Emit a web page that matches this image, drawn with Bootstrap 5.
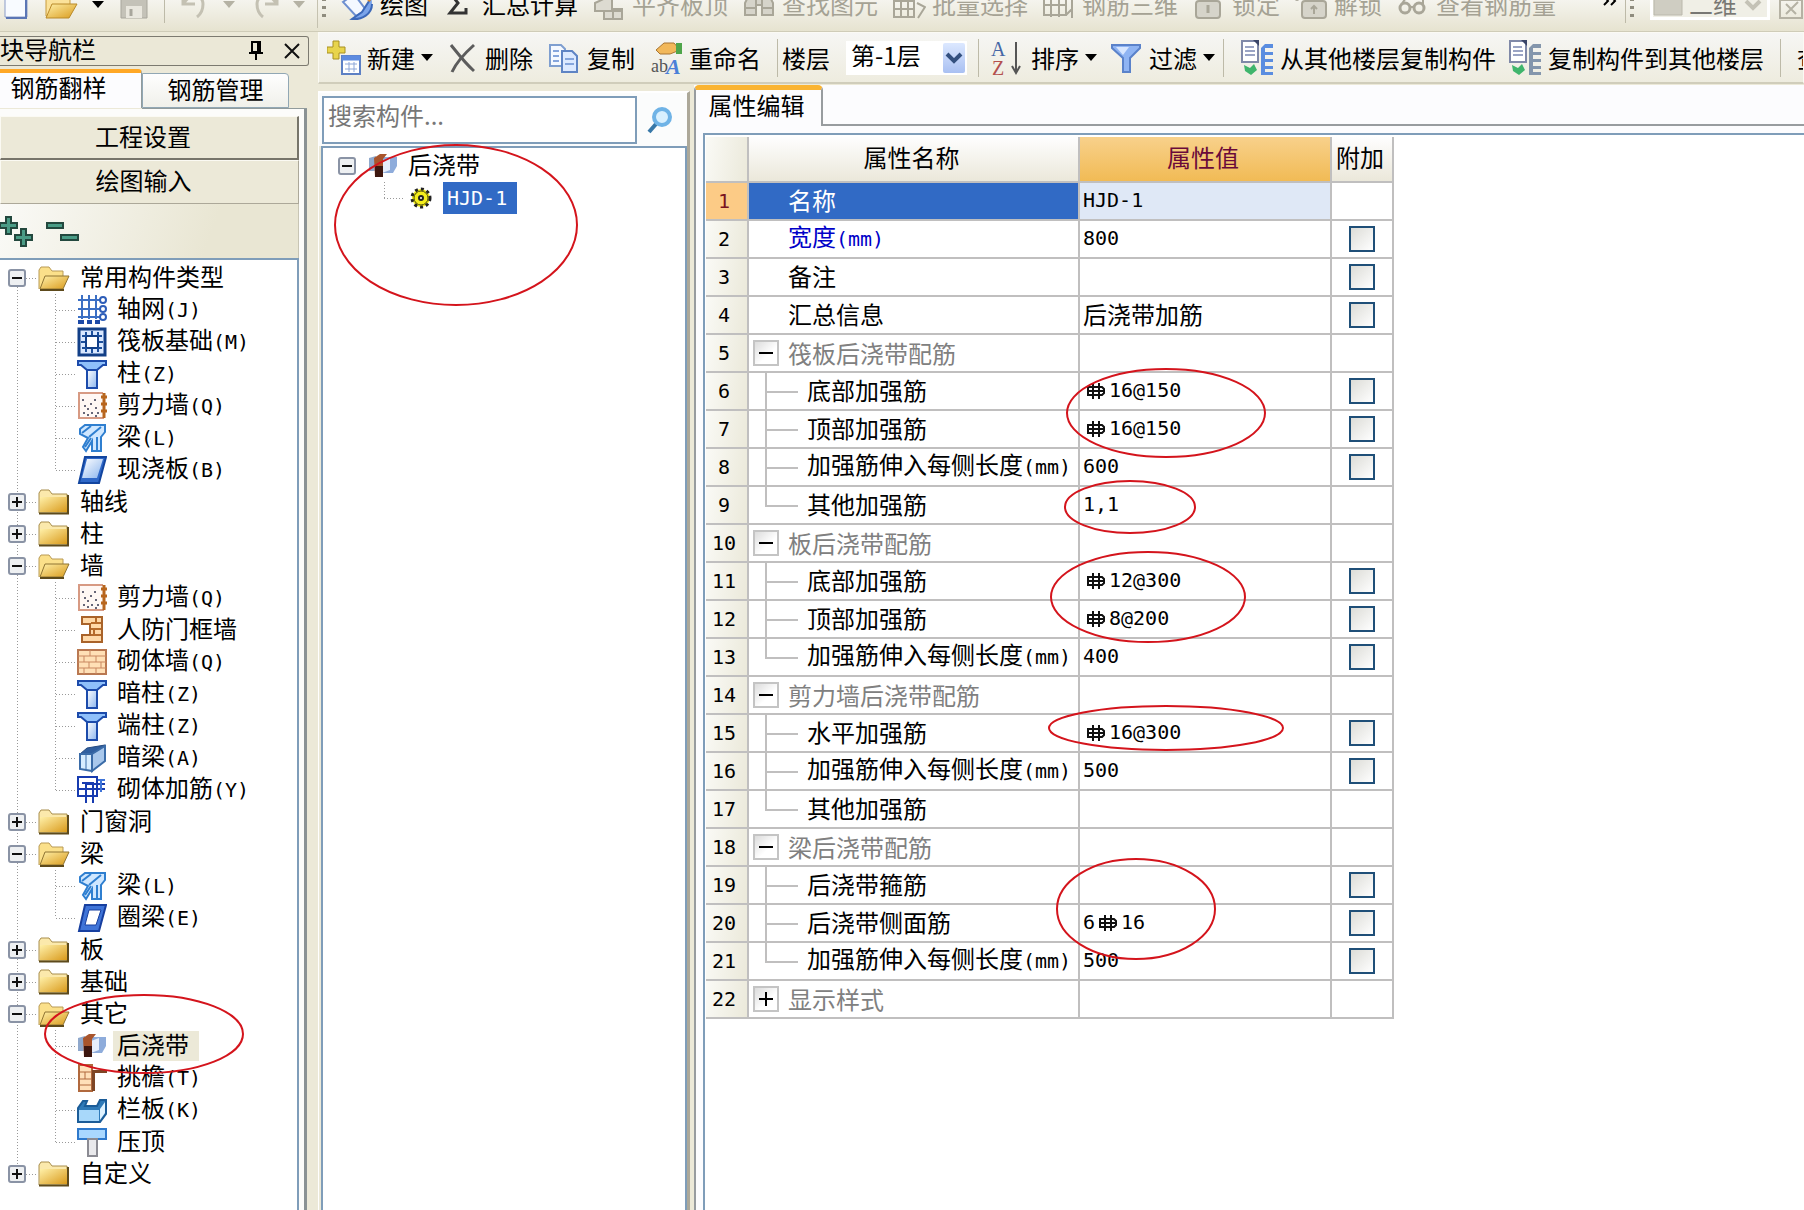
<!DOCTYPE html>
<html lang="zh-CN">
<head>
<meta charset="utf-8">
<meta name="viewport" content="width=device-width, initial-scale=1">
<title>钢筋翻样</title>
<link href="https://cdn.jsdelivr.net/npm/bootstrap@5.3.0/dist/css/bootstrap.min.css" rel="stylesheet">
<style>
:root{--face:#ece9d8;--line:#7f9db9;--grid:#c0bfbf;--ink:#000}
body{font:24px/24px "Noto Sans CJK SC",sans-serif;color:var(--ink);background:var(--face);white-space:nowrap}
button,input,select{font:inherit;color:inherit;letter-spacing:normal}
button{border:0;background:none;padding:0}
svg{display:block;flex:none}
.lat{font-family:"DejaVu Sans Mono",monospace;font-size:20px}
.tool{display:flex;align-items:center;gap:6px;flex:none}
.tool:disabled{color:#a5a294}
.vsep{width:1px;height:38px;background:#bdbaa8;flex:none}
.caret{width:0;height:0;border:6px solid transparent;border-top:7px solid #000;border-bottom:0;flex:none}
.caret-off{border-top-color:#b5b2a4}
.grip{width:4px;height:28px;background:repeating-linear-gradient(#8f8c7e 0 3px,transparent 3px 8px);flex:none}

/* upper toolbar, scrolled half out of view */
.topbar{height:32px;background:linear-gradient(#f5f4ee,#e6e3d0);border-bottom:1px solid #cfccb8;overflow:hidden;flex:none}
.topbar-row{height:48px;margin-top:-20px}
.file-tools{width:318px;border-right:1px solid #c5c2b0}
.draw-tools{gap:14px;padding-left:4px}
.mini-combo{border:3px solid #fff;background:#f0efe6;height:32px;width:120px}
.more{margin-right:8px;margin-bottom:14px}
.barbtns{height:52px;background:linear-gradient(#f6f6f4,#eeecdf);border:1px solid #fbfaf4;border-bottom:2px solid #d0cdbb;overflow:hidden;flex:none}
.floorbox{position:relative;width:121px;height:34px;background:#fff;flex:none;margin:0 -5px 0 16px}
.floorbox select{appearance:none;border:0;background:none;width:100%;height:100%;padding:0 0 6px 5px;outline:0}
.floorbox svg{position:absolute;right:2px;top:2px;pointer-events:none}

/* navigation dock */
.dock{width:318px;flex:none}
.dock-title{height:30px;width:309px;margin-top:4px;border:1px solid #7c7a70;border-left:0;border-radius:0 3px 3px 0;background:#ebe8d7}
.dock-tabs{height:42px;padding-top:3px}
.dock-tab{width:147px;height:35px;border:1px solid #91a7b4;border-radius:0 4px 0 0;background:linear-gradient(#fefefe,#f0f0ea);margin-top:4px;padding-bottom:3px}
.dock-tab.on{width:142px;height:39px;background:#fcfcfe;border:1px solid #919b9c;border-top:4px solid #ffa826;border-left:0;border-bottom:0;padding:0 24px 8px 0;margin-top:0}
.dock-body{width:307px;border-right:3px solid #8a9294;background:#fcfcfa;padding:7px 5px 0 0}
.dock-body-top{height:1px;width:165px;background:#919b9c;margin-left:142px;flex:none}
.pane-btn{height:44px;background:var(--face);border:1px solid #fbfaf3;border-right:2px solid #77756a;border-bottom:2px solid #77756a;width:100%;padding:0 12px 4px 0;flex:none}
.pane-btn.flat{border-right:1px solid #aca899;border-bottom:1px solid #aca899}
.expand-row{height:54px;background:linear-gradient(110deg,#fafaf7,#e9e6d3 70%);border-right:1px solid #c8c5b4;flex:none}
.tree-frame{border:2px solid var(--line);border-left:0;border-bottom:0;background:#fff;overflow:hidden}

/* trees */
.tree,.tree ul{list-style:none;margin:0;padding:0}
.tree{padding-top:2px;background:repeating-linear-gradient(#999 0 1px,#fff 1px 3px) 17px 18px/1px 896px no-repeat}
.tree ul{background:repeating-linear-gradient(#999 0 1px,#fff 1px 3px) 55px 0/1px calc(100% - 16px) no-repeat}
.node{display:flex;align-items:center;height:32px;padding-left:8px}
.node .dots{width:12px}
.node .glyph{margin-right:10px}
.node .name{padding-bottom:4px}
.tree ul .node{padding-left:56px}
.tree ul .node .dots{width:21px}
.dots{height:1px;background:repeating-linear-gradient(90deg,#999 0 1px,#fff 1px 3px);flex:none}
.picked{background:#ece9d8;padding:0 10px 4px 4px;margin-left:-4px;line-height:26px}
.twist{width:18px;height:18px;flex:none}

/* component list */
.parts{width:372px;background:var(--face);border-left:1px solid #fff;border-top:2px solid #fff;border-right:3px solid #aca899;margin-top:7px;flex:none}
.find-row{padding:3px 0 2px 3px;background:#fbfcfc;height:53px;flex:none}
.find-row input{width:315px;height:48px;border:2px solid var(--line);border-radius:0;background:#fff;padding:0 4px 12px;outline:0}
.find-row input::placeholder{color:#777;opacity:1}
.parts .tree-frame{border:2px solid var(--line);border-bottom:0;margin-left:2px}
.parts .tree{padding-top:2px;background:none}
.parts .tree .node{padding-left:15px}
.parts .tree ul{background-position:61px 0}
.parts .tree ul .node{padding-left:61px}
.chosen{background:#316ac5;color:#fff;padding:0 10px 0 4px;line-height:32px}

/* property editor */
.props{background:#fcfcfe;margin-top:1px}
.prop-tabs{height:41px;flex:none}
.prop-tab{width:129px;height:41px;border:2px solid #989c9f;border-top:5px solid #fab432;border-bottom:0;border-radius:5px 5px 0 0;background:#fcfcfe;padding:0 4px 7px 0}
.prop-tabs .rest{border-bottom:2px solid #989c9f}
.prop-body{border-left:2px solid #989c9f;padding:7px 0 0 7px}
.grid-frame{border:2px solid var(--line);border-right:0;border-bottom:0;background:#fff;padding:2px 0 0 1px;overflow:hidden}
.ptable{table-layout:fixed;width:687px;border-collapse:collapse;margin:0}
.ptable th,.ptable td{border:2px solid var(--grid);height:38px;padding:0 0 3px 3px;font-weight:400;vertical-align:middle;overflow:hidden}
.ptable thead th{height:45px;border-top:0;text-align:center;padding:0 4px 4px 0;background:linear-gradient(#fefefe,#ebe8da)}
.ptable thead th.hot{background:linear-gradient(#f8d18b,#f1bb55);color:#6a0a3a}
.ptable tr>:first-child{border-left:0;text-align:center;padding:0 5px 0 0;background:linear-gradient(100deg,#fafaf6,#ebe9da)}
.ptable tr.now>:first-child{background:#fccb86;color:#7a1420}
.ptable tr.now td:nth-child(2){background:#316ac5;color:#fff}
.ptable tr.now td:nth-child(3){background:#dfe8f6}
.ptable .top{padding-left:39px}
.ptable .keyprop{color:#0000c8}
.ptable .sub{padding-left:58px;background:linear-gradient(#c0bfbf,#c0bfbf) 16px 0/2px 100% no-repeat,linear-gradient(#c0bfbf,#c0bfbf) 16px 18px/33px 2px no-repeat}
.ptable .sub.end{background-size:2px 19px,33px 2px}
.ptable .grp{color:#808080;padding:0 0 0 4px}
.ptable td:last-child{padding:0;text-align:center}
.fold{width:26px;height:26px;border:2px solid #c4c4c4;background:linear-gradient(135deg,#dcdcdc,#fff 60%);color:#000;flex:none;margin-right:9px;display:flex;align-items:center;justify-content:center}
.ptable input{appearance:none;display:block;width:26px;height:26px;border:2px solid #1f4f78;background:linear-gradient(135deg,#dcdcd7,#fff);margin:0 auto}
.rebar{display:inline-block;vertical-align:-3px;margin:0 4px}
.marks{position:absolute;left:0;top:0;pointer-events:none}
</style>
<script src="https://cdn.jsdelivr.net/npm/bootstrap@5.3.0/dist/js/bootstrap.bundle.min.js"></script>
</head>
<body class="vh-100 overflow-hidden d-flex flex-column position-relative">
<svg width="0" height="0" class="position-absolute" aria-hidden="true">
<defs>
<linearGradient id="gy" x1="0" y1="0" x2="1" y2="1"><stop offset="0" stop-color="#fff0a8"/><stop offset="1" stop-color="#d99a1c"/></linearGradient>
<linearGradient id="gb" x1="0" y1="0" x2="1" y2="1"><stop offset="0" stop-color="#fff"/><stop offset="1" stop-color="#8bb5ee"/></linearGradient>
<linearGradient id="gc" x1="0" y1="0" x2="0" y2="1"><stop offset="0" stop-color="#dce8ff"/><stop offset="1" stop-color="#a9c0f2"/></linearGradient>
</defs>
<symbol id="minus" viewBox="0 0 18 18"><rect x="1" y="1" width="16" height="16" rx="2" fill="#eef0f2" stroke="#8a93a5" stroke-width="2"/><path d="M4 9h10" stroke="#111" stroke-width="2"/></symbol>
<symbol id="plus" viewBox="0 0 18 18"><rect x="1" y="1" width="16" height="16" rx="2" fill="#eef0f2" stroke="#8a93a5" stroke-width="2"/><path d="M4 9h10M9 4v10" stroke="#111" stroke-width="2"/></symbol>
<symbol id="fopen" viewBox="0 0 32 26"><path d="M1 24V5l2-3h8l3 4h11v5" fill="#fbe08a" stroke="#b99a55"/><path d="M2 24L7 11H31L25 24Z" fill="url(#gy)" stroke="#8f7433"/><path d="M2 25h24" stroke="#5d4a1c" stroke-width="2"/></symbol>
<symbol id="fshut" viewBox="0 0 32 26"><path d="M1 24V4l2-3h8l3 4h15v19Z" fill="#fbe9ac" stroke="#a98e4c"/><path d="M2 8H29V23H2Z" fill="url(#gy)"/><path d="M1 24.500H30V6" fill="none" stroke="#5d4a1c" stroke-width="2"/></symbol>
<symbol id="net" viewBox="0 0 30 30"><path d="M1 5h22M1 14h22M1 22h22M5 0v24M12 0v24M19 0v24" stroke="#3b6fc4" stroke-width="2"/><g fill="#fff" stroke="#2d5db8" stroke-width="2"><circle cx="26" cy="5" r="3"/><circle cx="26" cy="14" r="3"/><circle cx="26" cy="22" r="3"/></g><path d="M1 27h6M10 27h5M18 27h5" stroke="#1d4aa8" stroke-width="4"/></symbol>
<symbol id="raft" viewBox="0 0 30 30"><rect x="2" y="2" width="26" height="26" fill="#d9e8ff" stroke="#123f87" stroke-width="3"/><rect x="9" y="9" width="12" height="12" fill="#fff" stroke="#123f87" stroke-width="2"/><path d="M5 9h4M5 21h4M21 9h4M21 21h4M9 5v4M21 5v4M9 21v4M21 21v4M15 4v4M15 22v4M4 15h4M22 15h4" stroke="#1c4f9c" stroke-width="2"/></symbol>
<symbol id="col" viewBox="0 0 30 30"><path d="M1 2H29V6H26L20 11H10L4 6H1Z" fill="#8fc0fa" stroke="#1c4bab" stroke-width="2"/><path d="M10 11H20V29H10Z" fill="url(#gb)" stroke="#1c4bab" stroke-width="2"/></symbol>
<symbol id="shear" viewBox="0 0 30 30"><path d="M26 2H2V27H27" fill="#fff8f4" stroke="#d79a83" stroke-width="2"/><path d="M27 2v25M24 6h6M24 13h6M24 20h6" stroke="#b8661e" stroke-width="3"/><path d="M6 22h2M10 18h2M14 22h2M18 25h2M7 15h2M13 13h2M18 17h2M20 22h2M10 24h2M5 9h2M17 9h2" stroke="#667" stroke-width="2"/></symbol>
<symbol id="beam" viewBox="0 0 30 30"><path d="M3 6L8 2H28V9L24 14V28H15V18L9 28 6 24 11 15 3 11Z" fill="#cfe7ff" stroke="#2f7fd0" stroke-width="2"/><path d="M5 10L14 3M12 14L24 4M8 24L14 15M20 14V27" stroke="#2f7fd0" stroke-width="2"/></symbol>
<symbol id="slab" viewBox="0 0 30 30"><path d="M8 2H29L22 28H2Z" fill="#2f68c8" stroke="#12459f" stroke-width="2"/><path d="M10 4H26L20 23H5Z" fill="url(#gb)"/></symbol>
<symbol id="door" viewBox="0 0 30 30"><path d="M5 2H25V27H5V20H13V9H5Z" fill="#ffd9a8" stroke="#a9632a" stroke-width="2"/><path d="M14 8h10M14 14h10M14 20h10M19 3v5M17 14v6" stroke="#b66b2b" stroke-width="2"/></symbol>
<symbol id="brick" viewBox="0 0 30 30"><rect x="1" y="3" width="28" height="24" fill="#ffe0b6" stroke="#b97851" stroke-width="2"/><path d="M1 9h28M1 15h28M1 21h28M13 3v6M7 9v6M19 9v6M12 15v6M24 15v6M7 21v6M19 21v6" stroke="#c98760" stroke-width="1"/></symbol>
<symbol id="hid" viewBox="0 0 30 30"><path d="M3 11L10 5 28 2 18 11Z" fill="#305f9f" stroke="#244a80"/><path d="M3 11H15V28L3 26Z" fill="#d8edff" stroke="#3b6ca8" stroke-width="2"/><path d="M15 11L28 3V18L15 28Z" fill="#a9c8ec" stroke="#3b6ca8" stroke-width="2"/><path d="M9 12v14" stroke="#3b6ca8"/></symbol>
<symbol id="tie" viewBox="0 0 30 30"><path d="M1 2H20V21H1ZM1 14H28M8 9H28M9 9V28M16 14V28M5 8H16V14" fill="none" stroke="#173bb0" stroke-width="2"/><path d="M21 5h7M24 5v12" stroke="#3f74d8" stroke-width="2"/></symbol>
<symbol id="ring" viewBox="0 0 30 30"><path d="M8 2H29L22 28H2Z" fill="#3f74d8" stroke="#173f9f" stroke-width="2"/><path d="M12 7H24L19 22H8Z" fill="#fff" stroke="#173f9f"/></symbol>
<symbol id="strip" viewBox="0 0 30 30"><path d="M1 7L8 5V20H1Z" fill="#8fa8cc"/><path d="M13 6H29V15L25 22H13Z" fill="#8eacdb"/><path d="M14 10L22 7V19L14 22Z" fill="#e6eefb"/><path d="M6 7L12 3H19L15 8V26H7Z" fill="#a9552c"/><path d="M7 15H15V26H7Z" fill="#3d1710"/></symbol>
<symbol id="eave" viewBox="0 0 30 30"><path d="M2 2H15V28H2Z" fill="#ffe0b9" stroke="#b1693d" stroke-width="2"/><path d="M2 9h13M2 16h13M2 22h13M8 9v7" stroke="#b1693d" stroke-width="1"/><path d="M15 7H30V10H18V28H15Z" fill="#7e4625"/></symbol>
<symbol id="rail" viewBox="0 0 30 30"><path d="M1 13L6 6H10L8 11H20L23 5H29V19L23 27H1Z" fill="#2f7ab8" stroke="#1b5c98" stroke-width="2"/><path d="M2 15H22V26H2Z" fill="#a8d8fa"/><path d="M23 14L28 7V18L23 25Z" fill="#e0f3ff"/></symbol>
<symbol id="cope" viewBox="0 0 30 30"><rect x="1" y="2" width="28" height="10" fill="#a9d8ff" stroke="#2e79cc" stroke-width="2"/><rect x="11" y="12" width="9" height="17" fill="#e9e9ec" stroke="#8b8b93" stroke-width="2"/></symbol>
<symbol id="floors" viewBox="0 0 34 36"><path d="M21 8L25 4H33V8H25V12H33V15H25V19H33V22H25V26H33V29H25V32H33V35H21Z" fill="currentColor"/><path d="M2 1H18V22H2Z" fill="#fff" stroke="#8089a8" stroke-width="2"/><path d="M13 0H19V6Z" fill="#3b4668"/><path d="M5 7h9M5 11h10M5 15h10" stroke="#9aa4c4" stroke-width="2"/><path d="M4 25L10 28 14 24 17 30 11 35 5 31Z" fill="#3fb56c"/></symbol>
<symbol id="rebar" viewBox="0 0 18 18"><path d="M6 1V17M12 1V17M1 13V5H15L17 7V11L15 13ZM0 9H17" fill="none" stroke="#111" stroke-width="2"/></symbol>
</svg>

<header class="topbar d-flex">
 <div class="topbar-row d-flex align-items-center w-100">
  <div class="file-tools d-flex align-items-center h-100 flex-shrink-0">
   <button class="ms-1" aria-label="新建工程"><svg width="24" height="32"><path d="M1 1H23V29H1Z" fill="#f8fbff" stroke="#8a9cc8"/><path d="M2 30H22V4" fill="none" stroke="#5b76b5" stroke-width="2"/></svg></button>
   <button class="tool ms-3" aria-label="打开"><svg width="34" height="32"><path d="M2 28V4H26V28Z" fill="#fbe29a" stroke="#c79a3c"/><path d="M2 30L8 16H33L25 30Z" fill="url(#gy)" stroke="#b98a2a"/></svg><span class="caret ms-2"></span></button>
   <button class="ms-3" disabled aria-label="保存"><svg width="28" height="32"><path d="M1 2H27V30H1Z" fill="#c4c2b8" stroke="#a8a69c"/><rect x="6" y="18" width="16" height="12" fill="#e9e7de"/><path d="M11 21v7" stroke="#a8a69c" stroke-width="3"/></svg></button>
   <span class="vsep ms-3 me-3"></span>
   <button class="tool" disabled aria-label="撤销"><svg width="28" height="32"><path d="M2 2V16H14M3 15C8 6 22 6 22 16 22 22 20 26 16 29" fill="none" stroke="#c4c1b3" stroke-width="3"/></svg><span class="caret caret-off ms-2"></span></button>
   <button class="tool ms-3" disabled aria-label="重做"><svg width="28" height="32"><path d="M26 2V16H14M25 15C20 6 6 6 6 16 6 22 8 26 12 29" fill="none" stroke="#c4c1b3" stroke-width="3"/></svg><span class="caret caret-off ms-2"></span></button>
  </div>
  <div class="draw-tools d-flex align-items-center flex-shrink-0">
   <span class="grip"></span>
   <button class="tool"><svg width="34" height="36"><path d="M3 16L14 8 26 24 16 30Z" fill="#f4f8ff" stroke="#6d8fd0" stroke-width="2"/><path d="M31 4L33 9 22 26 12 33C22 34 32 28 32 18" fill="#7ba4ea" stroke="#3c68b8" stroke-width="2"/><path d="M26 10L31 14" stroke="#d88a34" stroke-width="5"/></svg>绘图</button>
   <button class="tool"><svg width="34" height="30"><path d="M24 9V4H8L16 14 8 24H24V19" fill="none" stroke="#333" stroke-width="3"/></svg>汇总计算</button>
   <button class="tool" disabled><svg width="34" height="34"><path d="M3 16L20 8V22H30V32H12V24H3Z" fill="#dddbd1" stroke="#a9a698" stroke-width="2"/><path d="M12 24H30M21 22V32" stroke="#a9a698" stroke-width="2"/></svg>平齐板顶</button>
   <button class="tool" disabled><svg width="34" height="34"><path d="M3 28V16L8 6H14V28ZM20 28V6H26L31 16V28ZM14 12H20V18H14ZM3 21H14M20 21H31" fill="#d6d4ca" stroke="#a9a698" stroke-width="2"/></svg>查找图元</button>
   <button class="tool" disabled><svg width="34" height="34"><path d="M2 6H22V30H2ZM2 14H22M2 22H22M9 6V30M16 6V30M25 16L33 20 26 31" fill="none" stroke="#a9a698" stroke-width="2"/></svg>批量选择</button>
   <button class="tool" disabled><svg width="34" height="34"><path d="M2 6H24V28H2ZM2 18H24M9 2V30M17 2V30M30 2V31M24 28L30 22" fill="none" stroke="#a9a698" stroke-width="2"/></svg>钢筋三维</button>
   <button class="tool" disabled><svg width="34" height="34"><path d="M9 14V6H23V14" fill="none" stroke="#b3b0a4" stroke-width="3"/><rect x="4" y="14" width="24" height="17" rx="3" fill="#d6d4ca" stroke="#a9a698" stroke-width="2"/><path d="M16 18v8" stroke="#a9a698" stroke-width="3"/></svg>锁定</button>
   <button class="tool" disabled><svg width="34" height="34"><path d="M3 14V6H15V14" fill="none" stroke="#b3b0a4" stroke-width="3"/><rect x="8" y="14" width="24" height="17" rx="3" fill="#d6d4ca" stroke="#a9a698" stroke-width="2"/><path d="M20 27V20M17 22L20 19 23 22" fill="none" stroke="#a9a698" stroke-width="2"/></svg>解锁</button>
   <button class="tool" disabled><svg width="34" height="34"><circle cx="9" cy="21" r="5" fill="none" stroke="#a9a698" stroke-width="3"/><circle cx="23" cy="21" r="5" fill="none" stroke="#a9a698" stroke-width="3"/><path d="M5 18L12 8M27 18V8M14 20h4" stroke="#a9a698" stroke-width="2"/></svg>查看钢筋量</button>
  </div>
  <div class="d-flex align-items-center h-100 ms-auto flex-shrink-0">
   <button class="more" aria-label="更多"><svg width="14" height="20"><path d="M1 9L5 14 1 18M8 9L12 14 8 18" fill="none" stroke="#000" stroke-width="2"/></svg></button>
   <span class="vsep"></span><span class="grip ms-1 me-3"></span>
   <div class="mini-combo tool"><svg width="30" height="26"><path d="M1 1H29V24H1Z" fill="#cfcdc2" stroke="#bab8ac"/></svg><span class="text-black-50">二维</span><svg width="20" height="24"><path d="M3 9L10 16 17 9" fill="none" stroke="#c4c2b6" stroke-width="4"/></svg></div>
   <svg width="26" height="32" class="ms-2"><path d="M2 2H24V30H2ZM2 12H24M8 26L20 14M8 16L18 26" fill="none" stroke="#b5b2a4" stroke-width="2"/></svg>
  </div>
 </div>
</header>

<div class="d-flex flex-fill overflow-hidden">
 <aside class="dock d-flex flex-column">
  <div class="dock-title d-flex align-items-center flex-shrink-0">
   <span class="flex-fill pb-1">块导航栏</span>
   <button class="me-3" aria-label="固定"><svg width="16" height="20"><path d="M4 1H12V11H4ZM10 1V11M1 12H15M8 12V19" fill="none" stroke="#000" stroke-width="2"/></svg></button>
   <button class="ms-1 me-2" aria-label="关闭"><svg width="16" height="18"><path d="M1 2L15 16M15 2L1 16" stroke="#111" stroke-width="2"/></svg></button>
  </div>
  <div class="dock-tabs d-flex align-items-start flex-shrink-0" role="tablist">
   <button class="dock-tab on" role="tab" aria-selected="true">钢筋翻样</button>
   <button class="dock-tab" role="tab" aria-selected="false">钢筋管理</button>
  </div>
  <div class="dock-body-top"></div>
  <div class="dock-body d-flex flex-column flex-fill overflow-hidden">
   <button class="pane-btn">工程设置</button>
   <button class="pane-btn flat">绘图输入</button>
   <div class="expand-row d-flex align-items-center">
    <button aria-label="全部展开"><svg width="34" height="32"><path d="M0 8H6V2H11V8H17V13H11V19H6V13H0ZM15 20H21V14H26V20H32V25H26V31H21V25H15Z" fill="#4a9c86" stroke="#23483e" stroke-width="2"/></svg></button>
    <button class="ms-2" aria-label="全部折叠"><svg width="40" height="32"><path d="M5 8H21V13H5ZM19 20H36V25H19Z" fill="#4a9c86" stroke="#23483e" stroke-width="2"/></svg></button>
   </div>
   <div class="tree-frame flex-fill">
    <ul class="tree">
     <li><div class="node"><svg class="twist"><use href="#minus"/></svg><i class="dots"></i><svg class="glyph" width="32" height="26"><use href="#fopen"/></svg><span class="name">常用构件类型</span></div>
      <ul>
       <li class="node"><i class="dots"></i><svg class="glyph" width="30" height="30"><use href="#net"/></svg><span class="name">轴网<span class="lat">(J)</span></span></li>
       <li class="node"><i class="dots"></i><svg class="glyph" width="30" height="30"><use href="#raft"/></svg><span class="name">筏板基础<span class="lat">(M)</span></span></li>
       <li class="node"><i class="dots"></i><svg class="glyph" width="30" height="30"><use href="#col"/></svg><span class="name">柱<span class="lat">(Z)</span></span></li>
       <li class="node"><i class="dots"></i><svg class="glyph" width="30" height="30"><use href="#shear"/></svg><span class="name">剪力墙<span class="lat">(Q)</span></span></li>
       <li class="node"><i class="dots"></i><svg class="glyph" width="30" height="30"><use href="#beam"/></svg><span class="name">梁<span class="lat">(L)</span></span></li>
       <li class="node"><i class="dots"></i><svg class="glyph" width="30" height="30"><use href="#slab"/></svg><span class="name">现浇板<span class="lat">(B)</span></span></li>
      </ul></li>
     <li class="node"><svg class="twist"><use href="#plus"/></svg><i class="dots"></i><svg class="glyph" width="32" height="26"><use href="#fshut"/></svg><span class="name">轴线</span></li>
     <li class="node"><svg class="twist"><use href="#plus"/></svg><i class="dots"></i><svg class="glyph" width="32" height="26"><use href="#fshut"/></svg><span class="name">柱</span></li>
     <li><div class="node"><svg class="twist"><use href="#minus"/></svg><i class="dots"></i><svg class="glyph" width="32" height="26"><use href="#fopen"/></svg><span class="name">墙</span></div>
      <ul>
       <li class="node"><i class="dots"></i><svg class="glyph" width="30" height="30"><use href="#shear"/></svg><span class="name">剪力墙<span class="lat">(Q)</span></span></li>
       <li class="node"><i class="dots"></i><svg class="glyph" width="30" height="30"><use href="#door"/></svg><span class="name">人防门框墙</span></li>
       <li class="node"><i class="dots"></i><svg class="glyph" width="30" height="30"><use href="#brick"/></svg><span class="name">砌体墙<span class="lat">(Q)</span></span></li>
       <li class="node"><i class="dots"></i><svg class="glyph" width="30" height="30"><use href="#col"/></svg><span class="name">暗柱<span class="lat">(Z)</span></span></li>
       <li class="node"><i class="dots"></i><svg class="glyph" width="30" height="30"><use href="#col"/></svg><span class="name">端柱<span class="lat">(Z)</span></span></li>
       <li class="node"><i class="dots"></i><svg class="glyph" width="30" height="30"><use href="#hid"/></svg><span class="name">暗梁<span class="lat">(A)</span></span></li>
       <li class="node"><i class="dots"></i><svg class="glyph" width="30" height="30"><use href="#tie"/></svg><span class="name">砌体加筋<span class="lat">(Y)</span></span></li>
      </ul></li>
     <li class="node"><svg class="twist"><use href="#plus"/></svg><i class="dots"></i><svg class="glyph" width="32" height="26"><use href="#fshut"/></svg><span class="name">门窗洞</span></li>
     <li><div class="node"><svg class="twist"><use href="#minus"/></svg><i class="dots"></i><svg class="glyph" width="32" height="26"><use href="#fopen"/></svg><span class="name">梁</span></div>
      <ul>
       <li class="node"><i class="dots"></i><svg class="glyph" width="30" height="30"><use href="#beam"/></svg><span class="name">梁<span class="lat">(L)</span></span></li>
       <li class="node"><i class="dots"></i><svg class="glyph" width="30" height="30"><use href="#ring"/></svg><span class="name">圈梁<span class="lat">(E)</span></span></li>
      </ul></li>
     <li class="node"><svg class="twist"><use href="#plus"/></svg><i class="dots"></i><svg class="glyph" width="32" height="26"><use href="#fshut"/></svg><span class="name">板</span></li>
     <li class="node"><svg class="twist"><use href="#plus"/></svg><i class="dots"></i><svg class="glyph" width="32" height="26"><use href="#fshut"/></svg><span class="name">基础</span></li>
     <li><div class="node"><svg class="twist"><use href="#minus"/></svg><i class="dots"></i><svg class="glyph" width="32" height="26"><use href="#fopen"/></svg><span class="name">其它</span></div>
      <ul>
       <li class="node"><i class="dots"></i><svg class="glyph" width="30" height="30"><use href="#strip"/></svg><span class="picked">后浇带</span></li>
       <li class="node"><i class="dots"></i><svg class="glyph" width="30" height="30"><use href="#eave"/></svg><span class="name">挑檐<span class="lat">(T)</span></span></li>
       <li class="node"><i class="dots"></i><svg class="glyph" width="30" height="30"><use href="#rail"/></svg><span class="name">栏板<span class="lat">(K)</span></span></li>
       <li class="node"><i class="dots"></i><svg class="glyph" width="30" height="30"><use href="#cope"/></svg><span class="name">压顶</span></li>
      </ul></li>
     <li class="node"><svg class="twist"><use href="#plus"/></svg><i class="dots"></i><svg class="glyph" width="32" height="26"><use href="#fshut"/></svg><span class="name">自定义</span></li>
    </ul>
   </div>
  </div>
 </aside>

 <main class="d-flex flex-column flex-fill overflow-hidden">
  <div class="barbtns d-flex align-items-center ps-2">
   <button class="tool me-3"><svg width="34" height="36"><path d="M6 1H12V7H18V13H12V19H6V13H0V7H6Z" fill="#e8d44c" stroke="#a89020"/><rect x="15" y="16" width="18" height="18" fill="#fff" stroke="#5d80c4" stroke-width="2"/><path d="M15 18H33" stroke="#5d8be0" stroke-width="5"/><path d="M18 24h12M18 29h12M22 22v10M27 22v10" stroke="#8ea7d8"/></svg>新建<span class="caret"></span></button>
   <button class="tool me-3"><svg width="30" height="34"><path d="M2 4C10 14 16 22 25 30M25 4C16 12 8 20 3 31" fill="none" stroke="#5c5c5c" stroke-width="3"/></svg>删除</button>
   <button class="tool me-3"><svg width="32" height="34"><path d="M1 4H12L16 8V25H1Z" fill="#f5f9ff" stroke="#7f9fd0" stroke-width="2"/><path d="M13 10H23L28 15V31H13Z" fill="#dce9ff" stroke="#5f84c4" stroke-width="2"/><path d="M4 10h6M4 15h6M4 20h6M16 18h9M16 23h9" stroke="#85a5dc" stroke-width="2"/></svg>复制</button>
   <button class="tool"><svg width="32" height="36"><path d="M5 10L13 3H23L29 10 19 14 9 14Z" fill="#f2b85a" stroke="#a87532"/><path d="M25 3H31V14H25Z" fill="#4fa54a"/><text x="0" y="32" font-family="Liberation Serif" font-size="18" fill="#555">ab</text><text x="15" y="34" font-family="Liberation Serif" font-weight="700" font-style="italic" font-size="22" fill="#4a7fd8">A</text></svg>重命名</button>
   <span class="vsep ms-3"></span>
   <label class="ms-1" for="floor">楼层</label>
   <div class="floorbox"><select id="floor"><option>第-1层</option></select><svg width="22" height="30"><rect width="22" height="30" rx="2" fill="url(#gc)"/><path d="M4 11L11 18 18 11" fill="none" stroke="#33507f" stroke-width="4"/></svg></div>
   <span class="vsep ms-3"></span>
   <button class="tool ms-2 me-2"><svg width="38" height="38"><text x="4" y="17" font-family="Liberation Serif" font-size="20" fill="#4566a5">A</text><text x="5" y="36" font-family="Liberation Serif" font-size="20" fill="#b4504f">Z</text><path d="M29 3V32M25 27L29 34 33 27" fill="none" stroke="#555" stroke-width="2"/></svg>排序<span class="caret"></span></button>
   <button class="tool ms-1"><svg width="34" height="34"><path d="M3 4H31V7L21 17V31H14V17L3 7Z" fill="#8fb4f3" stroke="#5a82ca" stroke-width="2"/><path d="M7 6H20L14 14Z" fill="#d7e6ff"/></svg>过滤<span class="caret"></span></button>
   <span class="vsep ms-2 me-3"></span>
   <button class="tool me-2"><svg width="34" height="36" color="#5a8de0"><use href="#floors"/></svg>从其他楼层复制构件</button>
   <button class="tool ms-1"><svg width="34" height="36" color="#8496ac"><use href="#floors"/></svg>复制构件到其他楼层</button>
   <span class="vsep mx-3"></span>
   <button class="tool">查</button>
  </div>

  <div class="d-flex flex-fill overflow-hidden">
   <section class="parts d-flex flex-column">
    <div class="find-row d-flex align-items-center">
     <input type="text" placeholder="搜索构件..." aria-label="搜索构件">
     <button class="ms-2" aria-label="搜索"><svg width="28" height="30"><path d="M4 27L11 19" stroke="#3878a8" stroke-width="4"/><circle cx="17" cy="12" r="8" fill="#d9f0fe" stroke="#6fb3e6" stroke-width="4"/></svg></button>
    </div>
    <div class="tree-frame flex-fill">
     <ul class="tree">
      <li><div class="node"><svg class="twist"><use href="#minus"/></svg><i class="dots opacity-0"></i><svg class="glyph" width="30" height="30"><use href="#strip"/></svg><span class="name">后浇带</span></div>
       <ul><li class="node"><i class="dots"></i><svg class="me-2 ms-1" width="26" height="24"><circle cx="12" cy="12" r="9" fill="#f4ee1c" stroke="#222" stroke-width="3" stroke-dasharray="3 3"/><circle cx="12" cy="12" r="7" fill="#f4ee1c" stroke="#55510c"/><circle cx="12" cy="12" r="2" fill="#fff" stroke="#222" stroke-width="2"/></svg><span class="chosen lat">HJD-1</span></li></ul></li>
     </ul>
    </div>
   </section>

   <section class="props d-flex flex-column flex-fill overflow-hidden ms-1">
    <div class="prop-tabs d-flex" role="tablist"><button class="prop-tab" role="tab" aria-selected="true">属性编辑</button><div class="rest flex-fill"></div></div>
    <div class="prop-body d-flex flex-fill overflow-hidden">
     <div class="grid-frame flex-fill">
      <table class="ptable">
       <colgroup><col width="42"><col width="331"><col width="252"><col width="62"></colgroup>
       <thead><tr><th></th><th>属性名称</th><th class="hot">属性值</th><th>附加</th></tr></thead>
       <tbody>
        <tr class="now"><th class="lat">1</th><td class="top">名称</td><td class="lat">HJD-1</td><td></td></tr>
        <tr><th class="lat">2</th><td class="top keyprop">宽度<span class="lat">(mm)</span></td><td class="lat">800</td><td><input type="checkbox" aria-label="附加 宽度"></td></tr>
        <tr><th class="lat">3</th><td class="top">备注</td><td></td><td><input type="checkbox" aria-label="附加 备注"></td></tr>
        <tr><th class="lat">4</th><td class="top">汇总信息</td><td>后浇带加筋</td><td><input type="checkbox" aria-label="附加 汇总信息"></td></tr>
        <tr><th class="lat">5</th><td class="grp"><div class="d-flex align-items-center"><button class="fold" aria-label="折叠"><svg width="14" height="14"><path d="M0 7H14" stroke="#000" stroke-width="2"/></svg></button>筏板后浇带配筋</div></td><td></td><td></td></tr>
        <tr><th class="lat">6</th><td class="sub">底部加强筋</td><td class="lat"><svg class="rebar" width="18" height="18"><use href="#rebar"/></svg>16@150</td><td><input type="checkbox" aria-label="附加 6"></td></tr>
        <tr><th class="lat">7</th><td class="sub">顶部加强筋</td><td class="lat"><svg class="rebar" width="18" height="18"><use href="#rebar"/></svg>16@150</td><td><input type="checkbox" aria-label="附加 7"></td></tr>
        <tr><th class="lat">8</th><td class="sub">加强筋伸入每侧长度<span class="lat">(mm)</span></td><td class="lat">600</td><td><input type="checkbox" aria-label="附加 8"></td></tr>
        <tr><th class="lat">9</th><td class="sub end">其他加强筋</td><td class="lat">1,1</td><td></td></tr>
        <tr><th class="lat">10</th><td class="grp"><div class="d-flex align-items-center"><button class="fold" aria-label="折叠"><svg width="14" height="14"><path d="M0 7H14" stroke="#000" stroke-width="2"/></svg></button>板后浇带配筋</div></td><td></td><td></td></tr>
        <tr><th class="lat">11</th><td class="sub">底部加强筋</td><td class="lat"><svg class="rebar" width="18" height="18"><use href="#rebar"/></svg>12@300</td><td><input type="checkbox" aria-label="附加 11"></td></tr>
        <tr><th class="lat">12</th><td class="sub">顶部加强筋</td><td class="lat"><svg class="rebar" width="18" height="18"><use href="#rebar"/></svg>8@200</td><td><input type="checkbox" aria-label="附加 12"></td></tr>
        <tr><th class="lat">13</th><td class="sub end">加强筋伸入每侧长度<span class="lat">(mm)</span></td><td class="lat">400</td><td><input type="checkbox" aria-label="附加 13"></td></tr>
        <tr><th class="lat">14</th><td class="grp"><div class="d-flex align-items-center"><button class="fold" aria-label="折叠"><svg width="14" height="14"><path d="M0 7H14" stroke="#000" stroke-width="2"/></svg></button>剪力墙后浇带配筋</div></td><td></td><td></td></tr>
        <tr><th class="lat">15</th><td class="sub">水平加强筋</td><td class="lat"><svg class="rebar" width="18" height="18"><use href="#rebar"/></svg>16@300</td><td><input type="checkbox" aria-label="附加 15"></td></tr>
        <tr><th class="lat">16</th><td class="sub">加强筋伸入每侧长度<span class="lat">(mm)</span></td><td class="lat">500</td><td><input type="checkbox" aria-label="附加 16"></td></tr>
        <tr><th class="lat">17</th><td class="sub end">其他加强筋</td><td></td><td></td></tr>
        <tr><th class="lat">18</th><td class="grp"><div class="d-flex align-items-center"><button class="fold" aria-label="折叠"><svg width="14" height="14"><path d="M0 7H14" stroke="#000" stroke-width="2"/></svg></button>梁后浇带配筋</div></td><td></td><td></td></tr>
        <tr><th class="lat">19</th><td class="sub">后浇带箍筋</td><td></td><td><input type="checkbox" aria-label="附加 19"></td></tr>
        <tr><th class="lat">20</th><td class="sub">后浇带侧面筋</td><td class="lat">6<svg class="rebar" width="18" height="18"><use href="#rebar"/></svg>16</td><td><input type="checkbox" aria-label="附加 20"></td></tr>
        <tr><th class="lat">21</th><td class="sub end">加强筋伸入每侧长度<span class="lat">(mm)</span></td><td class="lat">500</td><td><input type="checkbox" aria-label="附加 21"></td></tr>
        <tr><th class="lat">22</th><td class="grp"><div class="d-flex align-items-center"><button class="fold" aria-label="展开"><svg width="14" height="14"><path d="M0 7H14M7 0V14" stroke="#000" stroke-width="2"/></svg></button>显示样式</div></td><td></td><td></td></tr>
       </tbody>
      </table>
     </div>
    </div>
   </section>
  </div>
 </main>
</div>

<!-- hand-drawn review marks over the window -->
<svg class="marks" width="1300" height="1090" fill="none" stroke="#d4141c" stroke-width="2" aria-hidden="true">
 <ellipse cx="456" cy="225" rx="121" ry="80"/>
 <ellipse cx="144" cy="1034" rx="99" ry="39"/>
 <ellipse cx="1166" cy="413" rx="99" ry="44"/>
 <ellipse cx="1130" cy="507" rx="65" ry="26"/>
 <ellipse cx="1148" cy="597" rx="97" ry="45"/>
 <ellipse cx="1166" cy="728" rx="117" ry="22"/>
 <ellipse cx="1136" cy="909" rx="79" ry="50"/>
</svg>
</body>
</html>
